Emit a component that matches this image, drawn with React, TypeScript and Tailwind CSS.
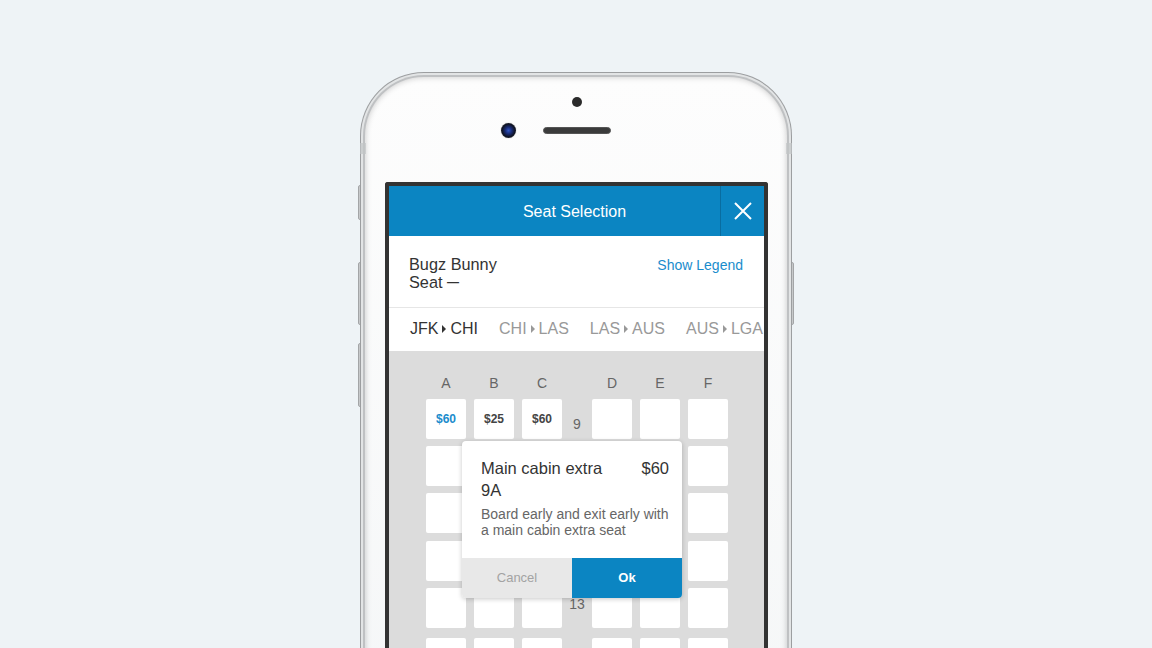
import React from "react";

const FONT = { fontFamily: '"Liberation Sans", Arial, Helvetica, sans-serif' };

function Seat({ label, blue }: { label?: string; blue?: boolean }) {
  return (
    <div
      className={`w-[40px] h-[40px] bg-white rounded-[2px] flex items-center justify-center text-[12px] font-bold ${
        blue ? "text-[#1a8ccc]" : "text-[#444]"
      }`}
    >
      {label}
    </div>
  );
}

type Row = { num?: number; mt: number; numTop: number; labels?: (string | undefined)[] };

const rows: Row[] = [
  { num: 9, mt: 0, numTop: 17, labels: ["$60", "$25", "$60"] },
  { mt: 7, numTop: 12 },
  { mt: 7, numTop: 12 },
  { mt: 8, numTop: 12 },
  { num: 13, mt: 7, numTop: 8 },
  { mt: 10, numTop: 17 },
  { mt: 7, numTop: 12 },
];

function Tab({ from, to, active }: { from: string; to: string; active?: boolean }) {
  const color = active ? "text-[#333]" : "text-[#999]";
  const tri = active ? "border-l-[#333]" : "border-l-[#999]";
  return (
    <div className={`flex items-center text-[16px] leading-[20px] whitespace-nowrap ${color}`}>
      <span>{from}</span>
      <span className={`mx-[4px] w-0 h-0 border-y-[4px] border-y-transparent border-l-[4px] ${tri}`} />
      <span>{to}</span>
    </div>
  );
}

export default function App() {
  return (
    <div className="w-[1152px] h-[648px] overflow-hidden bg-[#eef3f6] flex justify-center pt-[72px]" style={FONT}>
      <div className="relative w-[432px] h-[720px] shrink-0">
        {/* side buttons */}
        <div className="absolute left-[-2px] top-[113px] w-[4px] h-[35px] rounded-[2px] bg-gradient-to-r from-[#b8babc] to-[#f4f5f6] border border-[#a3a5a7]" />
        <div className="absolute left-[-2px] top-[190px] w-[4px] h-[63px] rounded-[2px] bg-gradient-to-r from-[#b8babc] to-[#f4f5f6] border border-[#a3a5a7]" />
        <div className="absolute left-[-2px] top-[271px] w-[4px] h-[64px] rounded-[2px] bg-gradient-to-r from-[#b8babc] to-[#f4f5f6] border border-[#a3a5a7]" />
        <div className="absolute right-[-2px] top-[190px] w-[4px] h-[63px] rounded-[2px] bg-gradient-to-l from-[#b8babc] to-[#f4f5f6] border border-[#a3a5a7]" />

        {/* body */}
        <div className="relative h-full rounded-[64px] bg-[#9c9ea0] p-px">
          <div className="h-full rounded-[63px] bg-[#e2e4e5] p-[2px]">
            <div className="h-full rounded-[61px] bg-[#bfc1c3] p-[2px]">
              <div className="h-full rounded-[59px] bg-gradient-to-b from-[#fdfdfd] to-[#f4f6f7] shadow-[inset_0_0_6px_rgba(0,0,0,0.22)] pl-[20px] pr-[19px] flex flex-col">
                {/* top area */}
                <div className="h-[105px] flex flex-col items-center pt-[20px] shrink-0">
                  <div className="w-[10px] h-[10px] rounded-full bg-[#2b2b2b]" />
                  <div className="mt-[16px] flex items-center">
                    <div className="w-[15px] h-[15px] rounded-full bg-[radial-gradient(circle_at_50%_50%,#2f56c4_0,#1a2d78_30%,#0f1424_60%,#3a3a3a_100%)] shadow-[0_0_1px_rgba(0,0,0,0.5)]" />
                    <div className="ml-[27px] w-[68px] h-[7px] rounded-full bg-[#3b3b3b] border border-[#555]" />
                    <div className="w-[42px]" />
                  </div>
                </div>

                {/* screen */}
                <div className="flex-1 border-[4px] border-b-0 border-[#333] rounded-t-[3px] flex flex-col bg-white overflow-hidden">
                  {/* header */}
                  <div className="h-[50px] bg-[#0b85c2] flex shrink-0">
                    <div className="flex-1 pl-[40px] pt-[2px] flex items-center justify-center text-white text-[16px]">
                      Seat Selection
                    </div>
                    <div className="w-[44px] border-l border-[#096da0] flex items-center justify-center">
                      <svg width="18" height="18" viewBox="0 0 18 18">
                        <path d="M1 1 L17 17 M17 1 L1 17" stroke="#fff" strokeWidth="2" fill="none" />
                      </svg>
                    </div>
                  </div>

                  {/* passenger */}
                  <div className="h-[72px] border-b border-[#e6e6e6] flex justify-between items-start pt-[19px] pl-[20px] pr-[21px] shrink-0">
                    <div className="text-[16.3px] leading-[18px] text-[#333]">
                      <div>Bugz Bunny</div>
                      <div>
                        Seat <span className="text-[12px] font-bold align-[2px]">—</span>
                      </div>
                    </div>
                    <div className="mt-px text-[14px] leading-[18px] text-[#1a8ccc]">Show Legend</div>
                  </div>

                  {/* tabs */}
                  <div className="h-[43px] flex items-center pl-[21px] gap-[21px] pb-[1px] shrink-0 overflow-hidden">
                    <Tab from="JFK" to="CHI" active />
                    <Tab from="CHI" to="LAS" />
                    <Tab from="LAS" to="AUS" />
                    <Tab from="AUS" to="LGA" />
                  </div>

                  {/* seat map */}
                  <div className="relative flex-1 bg-[#dcdcdc] pt-[24px] pl-[37px]">
                    <div className="flex h-[16px] text-[14px] leading-[16px] text-[#666] mb-[8px]">
                      {["A", "B", "C"].map((l, i) => (
                        <div key={l} className={`w-[40px] text-center ${i > 0 ? "ml-[8px]" : ""}`}>
                          {l}
                        </div>
                      ))}
                      <div className="w-[30px]" />
                      {["D", "E", "F"].map((l, i) => (
                        <div key={l} className={`w-[40px] text-center ${i > 0 ? "ml-[8px]" : ""}`}>
                          {l}
                        </div>
                      ))}
                    </div>

                    {rows.map((r, idx) => (
                      <div key={idx} className="flex" style={{ marginTop: r.mt }}>
                        <Seat label={r.labels?.[0]} blue={!!r.labels} />
                        <div className="ml-[8px]">
                          <Seat label={r.labels?.[1]} />
                        </div>
                        <div className="ml-[8px]">
                          <Seat label={r.labels?.[2]} />
                        </div>
                        <div className="w-[30px] text-center text-[14px] leading-[16px] text-[#666]" style={{ paddingTop: r.numTop }}>
                          {r.num}
                        </div>
                        <Seat />
                        <div className="ml-[8px]">
                          <Seat />
                        </div>
                        <div className="ml-[8px]">
                          <Seat />
                        </div>
                      </div>
                    ))}

                    {/* popup */}
                    <div className="absolute left-[73px] top-[90px] w-[220px] bg-white rounded-[4px] shadow-[0_1px_5px_rgba(0,0,0,0.22)] overflow-hidden">
                      <div className="pt-[16px] pl-[19px] pr-[13px] pb-[20px]">
                        <div className="flex justify-between text-[16.5px] leading-[22px] text-[#333]">
                          <span>Main cabin extra</span>
                          <span>$60</span>
                        </div>
                        <div className="text-[16.5px] leading-[22px] text-[#333]">9A</div>
                        <div className="mt-[5px] text-[14px] leading-[16px] text-[#666]">
                          Board early and exit early with a main cabin extra seat
                        </div>
                      </div>
                      <div className="flex h-[40px]">
                        <div className="w-[110px] bg-[#e8e8e8] text-[#a3a3a3] text-[13px] flex items-center justify-center">
                          Cancel
                        </div>
                        <div className="w-[110px] bg-[#0b85c2] text-white text-[13px] font-bold flex items-center justify-center">
                          Ok
                        </div>
                      </div>
                    </div>
                  </div>
                </div>
              </div>
            </div>
          </div>

          {/* antenna bands */}
          <div className="absolute left-0 top-[71px] w-[6px] h-[11px] bg-[#c2c4c6] opacity-70" />
          <div className="absolute right-0 top-[71px] w-[6px] h-[11px] bg-[#c2c4c6] opacity-70" />
        </div>
      </div>
    </div>
  );
}
